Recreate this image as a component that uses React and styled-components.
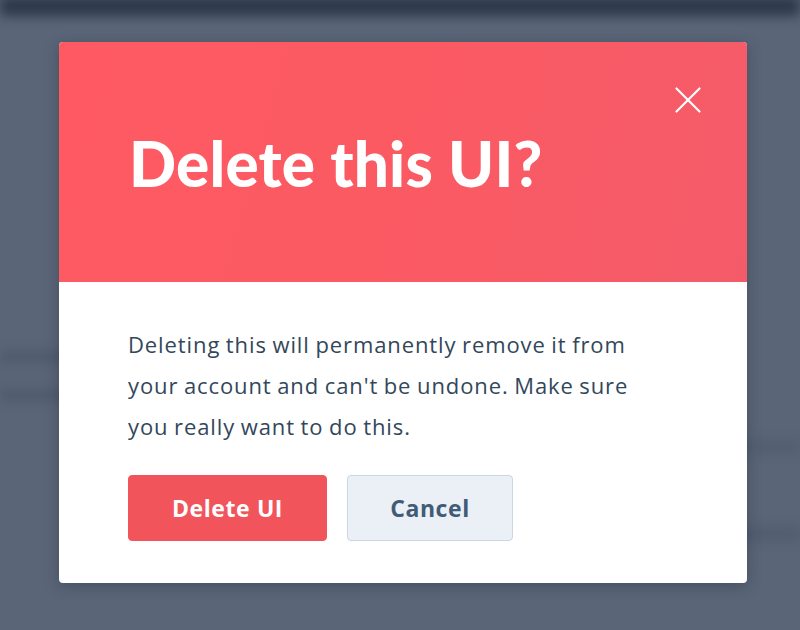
import React from "react";
import styled, { createGlobalStyle } from "styled-components";

const GlobalStyle = createGlobalStyle`
  html, body {
    margin: 0;
    padding: 0;
  }
  body {
    font-family: "Open Sans", "Lato", sans-serif;
    background: #5a6577;
  }
`;

const Page = styled.div`
  position: relative;
  width: 800px;
  height: 630px;
  overflow: hidden;
  background: #5a6577;
`;

// blurred app content behind the overlay
const Backdrop = styled.div`
  display: flex;
  flex-direction: column;
  height: 100%;
  filter: blur(6px);
`;

const TopBar = styled.div`
  height: 20px;
  margin-top: -4px;
  background: #2b394b;
  flex-shrink: 0;
`;

const Band = styled.div`
  height: ${(p) => p.$h}px;
  margin-top: ${(p) => p.$top}px;
  margin-left: ${(p) => p.$left || 0}px;
  width: ${(p) => p.$w || 800}px;
  background: ${(p) => p.$color || "#4e5a6c"};
  flex-shrink: 0;
`;

const Overlay = styled.div`
  position: absolute;
  inset: 0;
  display: flex;
  padding: 42px 0 0 59px;
`;

const Modal = styled.div`
  width: 688px;
  height: 541px;
  background: #ffffff;
  border-radius: 4px;
  overflow: hidden;
  box-shadow: 0 3px 14px rgba(30, 40, 55, 0.35);
  display: flex;
  flex-direction: column;
`;

const Header = styled.div`
  position: relative;
  height: 240px;
  flex-shrink: 0;
  background: linear-gradient(105deg, #ff5a63 0%, #fb5a63 50%, #f45b69 100%);
  display: flex;
  align-items: center;
  padding: 0 70px;
  box-sizing: border-box;
`;

const Title = styled.h1`
  margin: 0;
  margin-top: 2px;
  font-family: "Lato", sans-serif;
  font-weight: 900;
  font-size: 62px;
  color: #ffffff;
  letter-spacing: 0.2px;
`;

const CloseButton = styled.button`
  position: absolute;
  top: 45px;
  right: 46px;
  width: 26px;
  height: 26px;
  padding: 0;
  border: none;
  background: none;
  cursor: pointer;
  display: flex;
  align-items: center;
  justify-content: center;
`;

const Body = styled.div`
  padding: 42px 69px;
  display: flex;
  flex-direction: column;
`;

const Message = styled.p`
  margin: 0;
  max-width: 530px;
  font-family: "Open Sans", sans-serif;
  font-size: 22px;
  line-height: 41px;
  letter-spacing: 0.9px;
  word-spacing: -1px;
  color: #33475b;
`;

const Actions = styled.div`
  display: flex;
  gap: 20px;
  margin-top: 28px;
`;

const Button = styled.button`
  height: 66px;
  width: ${(p) => p.$w}px;
  box-sizing: border-box;
  border-radius: 4px;
  font-family: "Open Sans", sans-serif;
  font-weight: 700;
  font-size: 23px;
  letter-spacing: 0.6px;
  cursor: pointer;
  background: ${(p) => (p.$primary ? "#f2545b" : "#eaf0f6")};
  color: ${(p) => (p.$primary ? "#ffffff" : "#425b76")};
  border: 1px solid ${(p) => (p.$primary ? "#f2545b" : "#cbd6e2")};
`;

export default function App() {
  return (
    <Page>
      <GlobalStyle />
      <Backdrop>
        <TopBar />
        <Band $top={336} $h={10} $w={140} $color="#4d596b" />
        <Band $top={28} $h={10} $w={140} $color="#4d596b" />
        <Band $top={42} $h={10} $left={700} $w={100} $color="#505d70" />
        <Band $top={76} $h={12} $left={700} $w={100} $color="#4f5c6f" />
      </Backdrop>
      <Overlay>
        <Modal>
          <Header>
            <Title>Delete this UI?</Title>
            <CloseButton aria-label="Close">
              <svg width="26" height="26" viewBox="0 0 26 26">
                <path
                  d="M1.5 1.5 L24.5 24.5 M24.5 1.5 L1.5 24.5"
                  stroke="#ffffff"
                  strokeWidth="2.2"
                  strokeLinecap="round"
                />
              </svg>
            </CloseButton>
          </Header>
          <Body>
            <Message>
              Deleting this will permanently remove it from your account and
              can't be undone. Make sure you really want to do this.
            </Message>
            <Actions>
              <Button $primary $w={199}>Delete UI</Button>
              <Button $w={166}>Cancel</Button>
            </Actions>
          </Body>
        </Modal>
      </Overlay>
    </Page>
  );
}
